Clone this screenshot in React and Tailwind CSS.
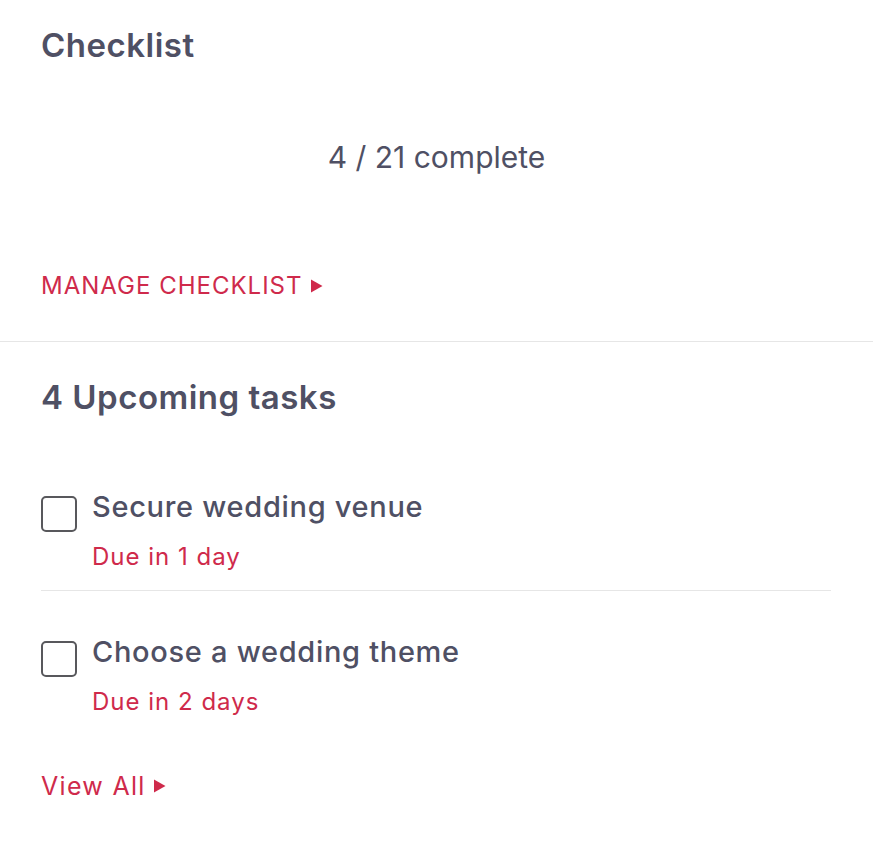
const TASKS = [
  { title: 'Secure wedding venue', due: 'Due in 1 day' },
  { title: 'Choose a wedding theme', due: 'Due in 2 days' },
]

function Arrow() {
  return (
    <svg width="13" height="14" viewBox="0 0 13 14" className="ml-[7px] shrink-0">
      <path d="M1 0.5 L12.5 7 L1 13.5 Z" fill="#cf2a4b" />
    </svg>
  )
}

export default function App() {
  return (
    <div
      className="w-[873px] h-[857px] bg-white text-[#4f5064]"
      style={{ fontFamily: 'Inter, "Noto Sans", sans-serif' }}
    >
      {/* Checklist */}
      <section className="px-[41px] pt-[25px] pb-[41px] border-b border-[#e6e6e6]">
        <h2 className="text-[33px] font-semibold leading-[40px] tracking-[0.5px]">Checklist</h2>
        <p className="mt-[74px] text-center text-[30px] leading-[36px] font-normal">4 / 21 complete</p>
        <a className="mt-[96px] flex items-center text-[24px] leading-[29px] tracking-[1px] text-[#cf2a4b]">
          MANAGE CHECKLIST <Arrow />
        </a>
      </section>

      {/* Upcoming */}
      <section className="px-[41px] pt-[35px]">
        <h2 className="text-[33px] font-semibold leading-[40px] tracking-[0.5px]">4 Upcoming tasks</h2>
        <ul className="mt-[72px] w-[790px]">
          {TASKS.map((t, i) => (
            <li key={t.title} className={i === 0 ? 'pb-[19px] border-b border-[#e6e6e6]' : 'pt-[43px]'}>
              <div className="flex items-start gap-[15px]">
                <span className="mt-[7px] w-[36px] h-[36px] shrink-0 rounded-[5px] border-2 border-[#58585c]" />
                <div>
                  <p className="text-[29px] leading-[35px] font-medium tracking-[0.7px]">{t.title}</p>
                  <p className="mt-[18px] text-[24px] leading-[29px] tracking-[1px] text-[#cf2a4b]">{t.due}</p>
                </div>
              </div>
            </li>
          ))}
        </ul>
        <a className="mt-[55px] flex items-center text-[25px] leading-[30px] tracking-[1.3px] text-[#cf2a4b]">
          View All <Arrow />
        </a>
      </section>
    </div>
  )
}
